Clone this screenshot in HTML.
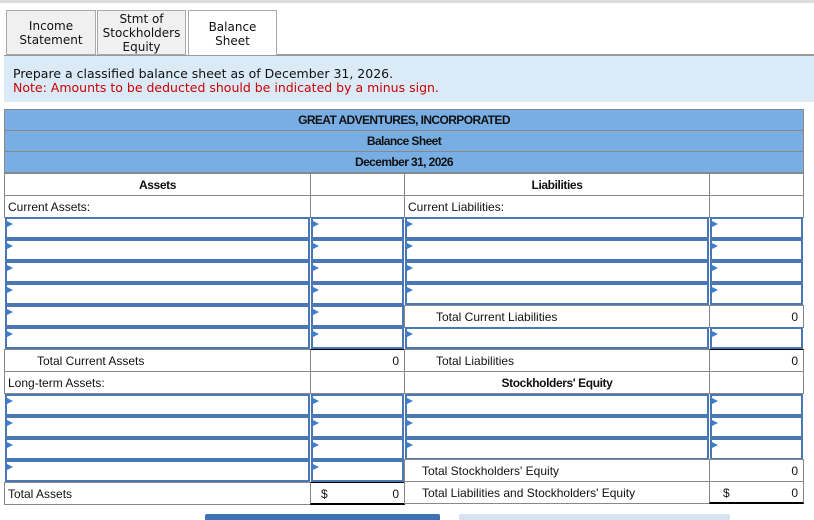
<!DOCTYPE html>
<html><head><meta charset="utf-8"><style>
body{margin:0;width:814px;height:520px;background:#fff;position:relative;overflow:hidden;font-family:"Liberation Sans",Arial,sans-serif;}
.topbar{position:absolute;left:0;top:0;width:814px;height:3px;background:#ddd}
.tab{position:absolute;top:10px;height:45px;box-sizing:border-box;border:1px solid #aaa;background:#f0f0f0;font-family:"DejaVu Sans",sans-serif;font-size:12px;line-height:14px;text-align:center;display:flex;align-items:center;justify-content:center;color:#111}
.tab.on{background:#fff;height:46px;border-bottom:none}
.note{position:absolute;left:4px;top:55px;width:810px;height:47px;background:#dbeaf7;border-top:1px solid #999;font-family:"DejaVu Sans",sans-serif;font-size:12.5px;line-height:14px;box-sizing:border-box;padding:11px 0 0 9px;color:#111}
.note span{color:#c00}
.hd{position:absolute;left:4px;width:800px;height:22px;box-sizing:border-box;background:#78aee3;border:1px solid #888;font-weight:bold;font-size:12px;text-align:center;line-height:21px;color:#111;letter-spacing:-0.6px}
.c{position:absolute;height:23px;box-sizing:border-box;border:1px solid #888;font-size:12px;line-height:22px;color:#111;white-space:nowrap}
.i{position:absolute;height:22px;box-sizing:border-box;border:2px solid #4a78b5;background:#fff}
.i::before{content:"";position:absolute;left:0;top:2px;border-left:6px solid #3b7dd0;border-top:3px solid transparent;border-bottom:3px solid transparent}
.a{left:4px;width:307px}.b{left:310px;width:95px}.cc{left:404px;width:306px}.d{left:709px;width:95px}
.ia{left:5px;width:305px}.ib{left:311px;width:93px}.ic{left:405px;width:304px}.id{left:710px;width:93px}
.r{text-align:right;padding-right:5px}
.bold{font-weight:bold;text-align:center;letter-spacing:-0.4px}
</style></head><body>
<div class="topbar"></div>
<div class="tab" style="left:6px;width:90px">Income<br>Statement</div>
<div class="tab" style="left:97px;width:89px">Stmt of<br>Stockholders<br>Equity</div>
<div class="tab on" style="left:188px;width:89px">Balance<br>Sheet</div>
<div style="position:absolute;left:277px;top:54px;width:537px;height:1px;background:#999"></div>
<div class="note">Prepare a classified balance sheet as of December 31, 2026.<br><span>Note: Amounts to be deducted should be indicated by a minus sign.</span></div>

<div class="hd" style="top:109px">GREAT ADVENTURES, INCORPORATED</div>
<div class="hd" style="top:130px">Balance Sheet</div>
<div class="hd" style="top:151px">December 31, 2026</div>

<div class="c a bold" style="top:173px">Assets</div><div class="c b" style="top:173px"></div>
<div class="c cc bold" style="top:173px">Liabilities</div><div class="c d" style="top:173px"></div>
<div class="c a" style="top:195px;padding-left:3px">Current Assets:</div><div class="c b" style="top:195px"></div>
<div class="c cc" style="top:195px;padding-left:3px">Current Liabilities:</div><div class="c d" style="top:195px"></div>

<div class="i ia" style="top:217px"></div><div class="i ib" style="top:217px"></div><div class="i ic" style="top:217px"></div><div class="i id" style="top:217px"></div>
<div class="i ia" style="top:239px"></div><div class="i ib" style="top:239px"></div><div class="i ic" style="top:239px"></div><div class="i id" style="top:239px"></div>
<div class="i ia" style="top:261px"></div><div class="i ib" style="top:261px"></div><div class="i ic" style="top:261px"></div><div class="i id" style="top:261px"></div>
<div class="i ia" style="top:283px"></div><div class="i ib" style="top:283px"></div><div class="i ic" style="top:283px"></div><div class="i id" style="top:283px"></div>
<div class="i ia" style="top:305px"></div><div class="i ib" style="top:305px"></div>
<div class="c cc" style="top:305px;padding-left:31px">Total Current Liabilities</div><div class="c d r" style="top:305px">0</div>
<div class="i ia" style="top:327px"></div><div class="i ib" style="top:327px"></div><div class="i ic" style="top:327px"></div><div class="i id" style="top:327px"></div>

<div class="c a" style="top:349px;padding-left:32px">Total Current Assets</div><div class="c b r" style="top:349px;border-top:1px solid #000">0</div>
<div class="c cc" style="top:349px;padding-left:31px">Total Liabilities</div><div class="c d r" style="top:349px;border-top:1px solid #000">0</div>
<div class="c a" style="top:371px;padding-left:3px">Long-term Assets:</div><div class="c b" style="top:371px"></div>
<div class="c cc bold" style="top:371px">Stockholders' Equity</div><div class="c d" style="top:371px"></div>

<div class="i ia" style="top:394px"></div><div class="i ib" style="top:394px"></div><div class="i ic" style="top:394px"></div><div class="i id" style="top:394px"></div>
<div class="i ia" style="top:416px"></div><div class="i ib" style="top:416px"></div><div class="i ic" style="top:416px"></div><div class="i id" style="top:416px"></div>
<div class="i ia" style="top:438px"></div><div class="i ib" style="top:438px"></div><div class="i ic" style="top:438px"></div><div class="i id" style="top:438px"></div>
<div class="i ia" style="top:460px"></div><div class="i ib" style="top:460px"></div>
<div class="c cc" style="top:459px;padding-left:17px">Total Stockholders' Equity</div><div class="c d r" style="top:459px">0</div>

<div class="c a" style="top:482px;padding-left:3px">Total Assets</div>
<div class="c b r" style="top:482px;border-top:1px solid #000;border-bottom:2px solid #000"><span style="position:absolute;left:10px">$</span>0</div>
<div class="c cc" style="top:481px;padding-left:17px">Total Liabilities and Stockholders' Equity</div>
<div class="c d r" style="top:481px;border-bottom:2px solid #000"><span style="position:absolute;left:13px">$</span>0</div>

<div style="position:absolute;left:205px;top:514px;width:235px;height:6px;background:#3c73b4;border-radius:2px 2px 0 0"></div>
<div style="position:absolute;left:459px;top:514px;width:271px;height:6px;background:#d6e3f1;border-radius:2px 2px 0 0"></div>
</body></html>
